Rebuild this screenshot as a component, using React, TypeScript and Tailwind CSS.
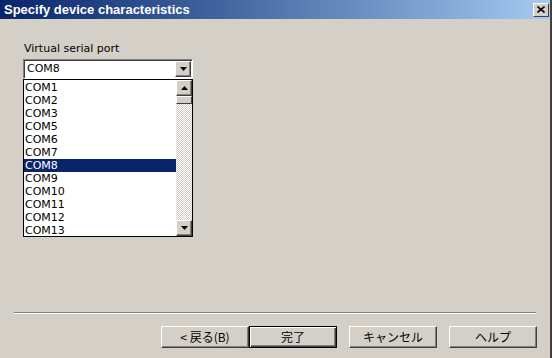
import React from 'react';

const ports = ['COM1', 'COM2', 'COM3', 'COM5', 'COM6', 'COM7', 'COM8', 'COM9', 'COM10', 'COM11', 'COM12', 'COM13'];

const font = { fontFamily: 'Tahoma, "DejaVu Sans", "Noto Sans CJK JP", sans-serif' };

const ArrowBtn: React.FC<{ up?: boolean }> = ({ up }) => (
  <div className="w-[16px] h-[16px] bg-[#d4d0c8] border border-t-white border-l-white border-r-[#404040] border-b-[#404040] flex items-center justify-center shadow-[inset_-1px_-1px_0_#808080]">
    <svg width="7" height="4" viewBox="0 0 7 4">
      {up ? <path d="M3.5 0 L7 4 L0 4 Z" fill="#000" /> : <path d="M0 0 L7 0 L3.5 4 Z" fill="#000" />}
    </svg>
  </div>
);

const Button: React.FC<{ label: string; primary?: boolean; className?: string }> = ({ label, primary, className }) => (
  <div
    className={`w-[88px] h-[22px] flex items-center justify-center text-[12px] text-black bg-[#d4d0c8] ${
      primary
        ? 'border border-black shadow-[inset_1px_1px_0_#fff,inset_-1px_-1px_0_#404040,inset_-2px_-2px_0_#808080]'
        : 'border border-t-white border-l-white border-r-[#404040] border-b-[#404040] shadow-[inset_-1px_-1px_0_#808080]'
    } ${className ?? ''}`}
    style={{ fontFamily: '"Noto Sans CJK JP", sans-serif' }}
  >
    {label}
  </div>
);

export default function App() {
  return (
    <div className="w-[552px] h-[358px] bg-[#d4d0c8] border-r-2 border-r-[#404040] flex flex-col overflow-hidden" style={font}>
      {/* Title bar */}
      <div className="h-[19px] flex items-center justify-between pl-[4px] pr-[1px] bg-gradient-to-r from-[#0a246a] to-[#a6caf0]">
        <span className="text-white font-bold text-[13px] leading-none" style={{ fontFamily: '"Liberation Sans", Arial, sans-serif' }}>
          Specify device characteristics
        </span>
        <div className="w-[16px] h-[14px] bg-[#d4d0c8] border border-t-white border-l-white border-r-[#404040] border-b-[#404040] flex items-center justify-center">
          <svg width="8" height="7" viewBox="0 0 8 7">
            <path d="M0.5 0.5 L7.5 6.5 M7.5 0.5 L0.5 6.5" stroke="#000" strokeWidth="1.6" />
          </svg>
        </div>
      </div>

      {/* Body */}
      <div className="flex-1 flex flex-col pl-[23px] pt-[24px]">
        <div className="text-[11px] text-black leading-none mb-[5px] ml-[1px]">Virtual serial port</div>

        <div className="w-[170px] h-[20px] bg-white border border-t-[#808080] border-l-[#808080] border-r-white border-b-white shadow-[inset_1px_1px_0_#404040] flex items-center justify-between pl-[3px] pr-[1px]">
          <span className="text-[11px] text-black">COM8</span>
          <ArrowBtn />
        </div>

        <div className="w-[170px] h-[158px] bg-white border border-black flex">
          <div className="flex-1 flex flex-col pt-[1px]">
            {ports.map((p) => (
              <div
                key={p}
                className={`h-[13px] leading-[13px] text-[11px] pl-[1px] ${p === 'COM8' ? 'bg-[#0a246a] text-white' : 'text-black'}`}
              >
                {p}
              </div>
            ))}
          </div>
          <div className="w-[16px] flex flex-col bg-[repeating-conic-gradient(#d4d0c8_0%_25%,#ffffff_0%_50%)] bg-[length:2px_2px]">
            <ArrowBtn up />
            <div className="h-[8px] bg-[#d4d0c8] border border-t-white border-l-white border-r-[#404040] border-b-[#404040]" />
            <div className="flex-1" />
            <ArrowBtn />
          </div>
        </div>
      </div>

      {/* Separator */}
      <div className="mx-[14px] h-[2px] border-t border-t-[#808080] border-b border-b-white" />

      {/* Buttons */}
      <div className="flex items-center pl-[161px] pt-[12px] pb-[10px]">
        <Button label="< 戻る(B)" />
        <Button label="完了" primary />
        <Button label="キャンセル" className="ml-[12px]" />
        <Button label="ヘルプ" className="ml-[12px]" />
      </div>
    </div>
  );
}
